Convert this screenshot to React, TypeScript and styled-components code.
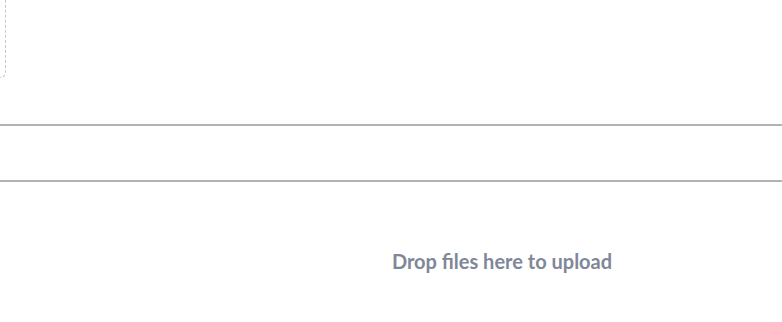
import React from "react";
import styled, { createGlobalStyle } from "styled-components";

const Global = createGlobalStyle`
  html, body { margin: 0; padding: 0; background: #ffffff; overflow: hidden; }
  body { font-family: Lato, "Open Sans", sans-serif; }
`;

const Page = styled.div`
  width: 782px;
  height: 322px;
  display: flex;
  flex-direction: column;
  overflow: hidden;
`;

const TopArea = styled.div`
  height: 124px;
  display: flex;
  align-items: flex-start;
`;

const DashedBox = styled.div`
  margin-left: -200px;
  width: 204px;
  height: 77px;
  border: 1px dashed #c8c8c8;
  border-top: none;
  border-radius: 0 0 6px 6px;
  flex-shrink: 0;
`;

const Band = styled.div`
  height: 54px;
  border-top: 2px solid #b3b3b3;
  border-bottom: 2px solid #b3b3b3;
`;

const DropZone = styled.div`
  flex: 1;
  display: flex;
  justify-content: center;
  padding-left: 222px;
  padding-top: 67px;
`;

const DropText = styled.span`
  font-family: Lato, sans-serif;
  font-weight: 700;
  font-size: 20px;
  line-height: 24px;
  color: #808799;
`;

export default function App() {
  return (
    <Page>
      <Global />
      <TopArea>
        <DashedBox />
      </TopArea>
      <Band />
      <DropZone>
        <DropText>Drop files here to upload</DropText>
      </DropZone>
    </Page>
  );
}
